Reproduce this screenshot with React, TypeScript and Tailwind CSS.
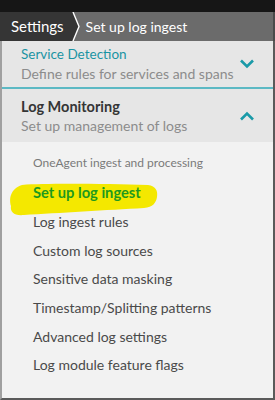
import React from "react";

function Chevron({ up }: { up?: boolean }) {
  return (
    <svg width="16" height="10" viewBox="0 0 16 10" className="shrink-0">
      <path
        d={up ? "M2 8.5 L8 2.5 L14 8.5" : "M2 1.5 L8 7.5 L14 1.5"}
        fill="none"
        stroke="#1a9aa8"
        strokeWidth="2.6"
      />
    </svg>
  );
}

const items = [
  "Log ingest rules",
  "Custom log sources",
  "Sensitive data masking",
  "Timestamp/Splitting patterns",
  "Advanced log settings",
  "Log module feature flags",
];

export default function App() {
  return (
    <div className="w-[275px] h-[400px] overflow-hidden flex flex-col bg-[#f2f2f2] font-['Lato',sans-serif]">
      {/* top strip */}
      <div className="h-[12px] bg-[#161616] shrink-0" />

      {/* breadcrumb */}
      <div className="h-[29px] flex shrink-0 bg-[#6b6b6b] border-r-2 border-[#4a4a4a]">
        <div className="bg-[#353535] pl-[11px] pr-[5px] flex items-center text-white text-[15px]">
          Settings
        </div>
        <svg width="12" height="29" viewBox="0 0 12 29" className="shrink-0">
          <path d="M0 0 L4 0 L10 14.5 L4 29 L0 29 Z" fill="#353535" />
          <path d="M4 0 L10 14.5 L4 29" fill="none" stroke="#ffffff" strokeWidth="1.4" />
        </svg>
        <div className="flex items-center pl-[5px] text-white text-[14px]">Set up log ingest</div>
      </div>

      <div className="flex-1 flex flex-col border-l-2 border-r-2 border-b-2 border-l-[#a0a0a0] border-r-[#5a5a5a] border-b-[#5a5a5a]">
        {/* Service Detection */}
        <div className="h-[48px] bg-[#e6e6e6] flex items-center pl-[19px] pr-[18px] border-b-2 border-[#5cb9c4] shrink-0">
          <div className="flex-1 flex flex-col leading-none mt-[1px]">
            <span className="text-[13.5px] text-[#1a94a3]">Service Detection</span>
            <span className="text-[14px] text-[#8c8c8c] mt-[6px]">Define rules for services and spans</span>
          </div>
          <Chevron />
        </div>

        {/* Log Monitoring */}
        <div className="h-[53px] bg-[#e6e6e6] flex items-center pl-[19px] pr-[18px] shrink-0">
          <div className="flex-1 flex flex-col leading-none mt-[2px]">
            <span className="text-[14.5px] font-bold text-[#353535]">Log Monitoring</span>
            <span className="text-[14px] text-[#8c8c8c] mt-[5px]">Set up management of logs</span>
          </div>
          <Chevron up />
        </div>

        {/* Sub navigation */}
        <div className="flex flex-col pl-[31px] pt-[10px]">
          <div className="h-[20px] flex items-center text-[12px] text-[#7a7a7a] mt-[1px]">
            OneAgent ingest and processing
          </div>
          <div className="relative h-[29px] mt-[5px] flex items-center">
            <svg
              width="152"
              height="34"
              viewBox="0 0 152 34"
              className="absolute left-[-25px] top-[5px]"
            >
              <path
                d="M14 2 C40 0 100 1 140 2 C148 3 150 8 149 14 C148 20 145 24 136 25 C100 27 50 30 16 32 C6 33 2 29 3 23 C1 16 2 6 14 2 Z"
                fill="#f4e800"
              />
            </svg>
            <span className="relative text-[14.7px] font-bold text-[#1e9a1e]">Set up log ingest</span>
          </div>
          {items.map((t) => (
            <div key={t} className="h-[28.7px] flex items-center text-[14px] text-[#4a4a4a]">
              {t}
            </div>
          ))}
        </div>
      </div>
    </div>
  );
}
